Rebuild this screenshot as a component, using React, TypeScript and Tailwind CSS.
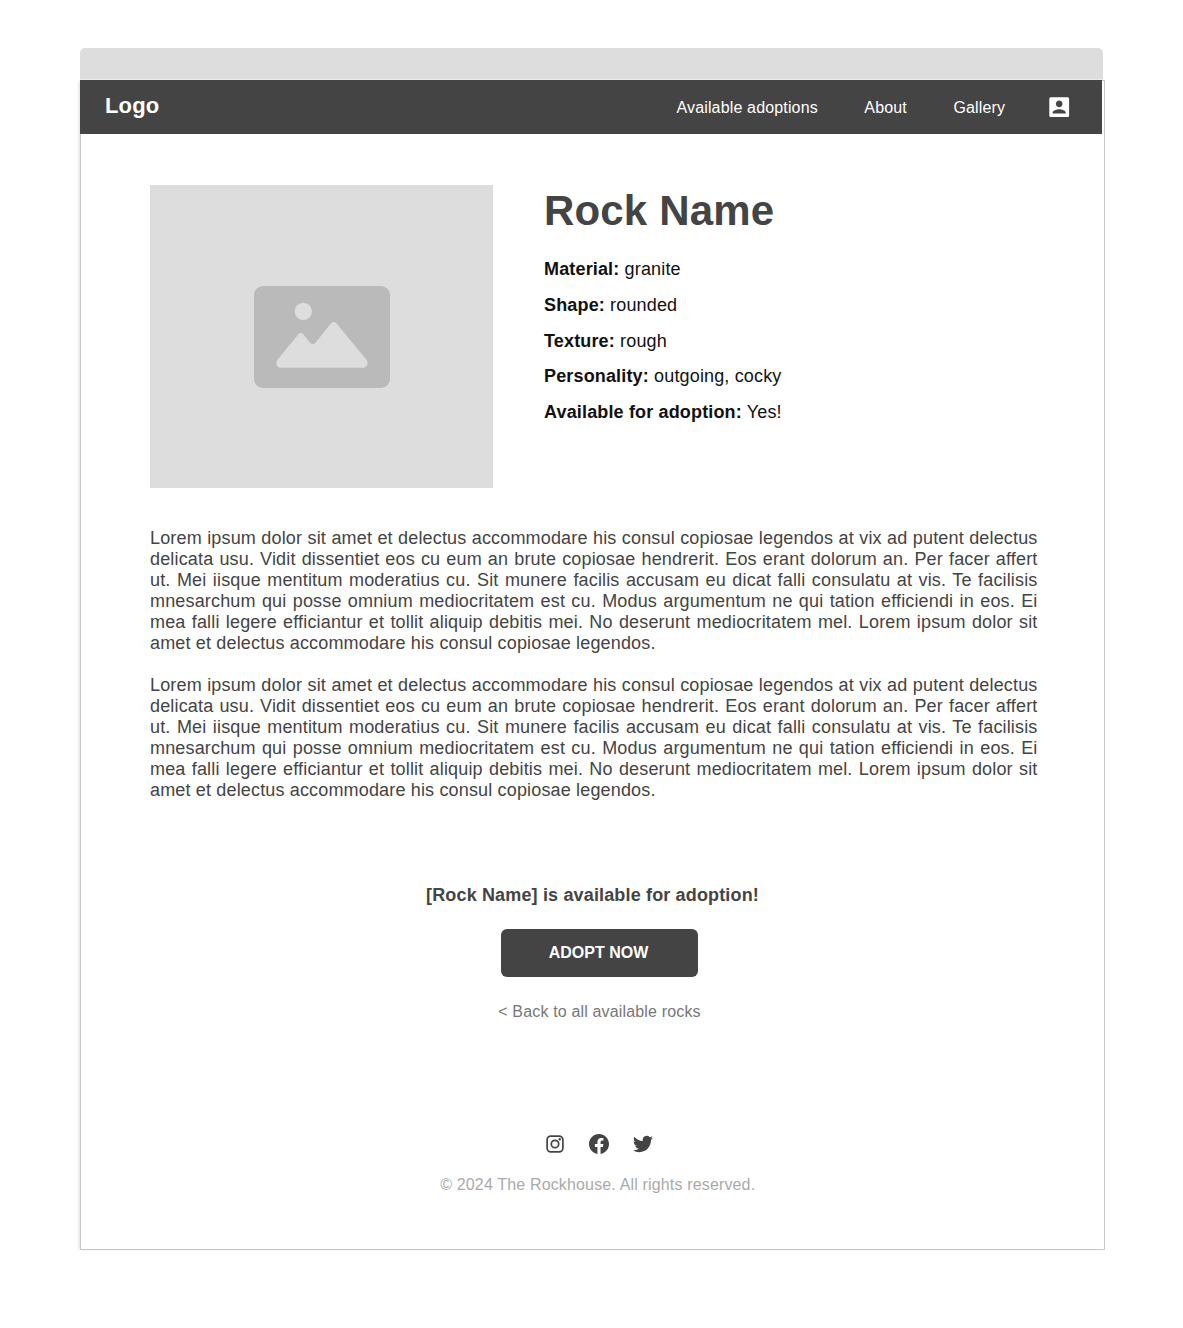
import React from "react";

const LOREM =
  "Lorem ipsum dolor sit amet et delectus accommodare his consul copiosae legendos at vix ad putent delectus delicata usu. Vidit dissentiet eos cu eum an brute copiosae hendrerit. Eos erant dolorum an. Per facer affert ut. Mei iisque mentitum moderatius cu. Sit munere facilis accusam eu dicat falli consulatu at vis. Te facilisis mnesarchum qui posse omnium mediocritatem est cu. Modus argumentum ne qui tation efficiendi in eos. Ei mea falli legere efficiantur et tollit aliquip debitis mei. No deserunt mediocritatem mel. Lorem ipsum dolor sit amet et delectus accommodare his consul copiosae legendos.";

const FACTS = [
  ["Material:", "granite"],
  ["Shape:", "rounded"],
  ["Texture:", "rough"],
  ["Personality:", "outgoing, cocky"],
  ["Available for adoption:", "Yes!"],
];

function ImagePlaceholder() {
  return (
    <div className="flex h-[303px] w-[343px] shrink-0 items-center justify-center bg-[#ddd]">
      <svg width="136" height="102" viewBox="0 0 136 102" className="ml-px">
        <rect width="136" height="102" rx="9" fill="#bababa" />
        <circle cx="49.3" cy="25.4" r="8.6" fill="#ddd" />
        <path
          d="M23.8 73.2 L43.8 49 Q46.8 45.2 49.8 48.8 L56 56.4 Q58.8 59.4 61.6 56.4 L76.5 37.9 Q79.8 34 83 37.9 L112.1 73.2 C115.6 77.8 112.4 81.8 108.8 81.8 H27 C23 81.8 20.6 77 23.8 73.2 Z"
          fill="#ddd"
        />
      </svg>
    </div>
  );
}

function AccountIcon() {
  return (
    <svg viewBox="0 0 24 24" fill="currentColor" className="ml-[40.4px] size-[26.4px] shrink-0">
      <path d="M3 4.5v15c0 .9.6 1.5 1.5 1.5h15c.9 0 1.5-.6 1.5-1.5v-15c0-.9-.6-1.5-1.5-1.5h-15C3.6 3 3 3.6 3 4.5zM15 9c0 1.66-1.34 3-3 3s-3-1.34-3-3 1.34-3 3-3 3 1.34 3 3zm-9 8c0-2 4-3.1 6-3.1s6 1.1 6 3.1v.8H6V17z" />
    </svg>
  );
}

function InstagramIcon() {
  return (
    <svg width="20" height="20" viewBox="0 0 20 20" fill="none" stroke="#444">
      <rect x="2.1" y="2.1" width="15.8" height="15.8" rx="3.8" strokeWidth="1.7" />
      <circle cx="10" cy="10" r="3.7" strokeWidth="1.7" />
      <circle cx="14.7" cy="5.2" r="1.2" fill="#444" stroke="none" />
    </svg>
  );
}

function FacebookIcon() {
  return (
    <svg width="20" height="20" viewBox="0 0 24 24" fill="#444">
      <path d="M24 12.07C24 5.4 18.63 0 12 0S0 5.4 0 12.07c0 6.03 4.39 11.02 10.13 11.93v-8.44H7.08v-3.49h3.05V9.41c0-3.02 1.79-4.69 4.53-4.69 1.31 0 2.68.24 2.68.24v2.97h-1.51c-1.49 0-1.96.93-1.96 1.89v2.25h3.33l-.53 3.49h-2.8V24C19.61 23.09 24 18.1 24 12.07z" />
    </svg>
  );
}

function TwitterIcon() {
  return (
    <svg width="20" height="20" viewBox="0 0 24 24" fill="#444">
      <path d="M23.95 4.57a10 10 0 0 1-2.82.77 4.96 4.96 0 0 0 2.16-2.72c-.95.55-2 .95-3.13 1.18a4.92 4.92 0 0 0-8.38 4.48C7.69 8.1 4.07 6.13 1.64 3.16a4.82 4.82 0 0 0-.67 2.48c0 1.71.87 3.21 2.19 4.1a4.9 4.9 0 0 1-2.23-.62v.06a4.92 4.92 0 0 0 3.95 4.83 5 5 0 0 1-2.21.08 4.94 4.94 0 0 0 4.6 3.42A9.87 9.87 0 0 1 0 19.54a13.99 13.99 0 0 0 7.56 2.21c9.05 0 14-7.5 14-13.98 0-.21 0-.42-.02-.63a9.94 9.94 0 0 0 2.46-2.55l-.05-.02z" />
    </svg>
  );
}

export default function App() {
  return (
    <div className="min-h-[1328px] bg-white pt-12 pl-20 font-['Liberation_Sans',Arial,sans-serif]">
      <div className="h-8 w-[1023px] rounded-t-[5px] border-b border-[#f3f3f3] bg-[#ddd]" />
      <div className="flex h-[1170px] w-[1025px] flex-col border border-[#c8c8c8] bg-white tracking-[0.155px] shadow-[-2px_0_3px_-1px_rgba(0,0,0,0.14)]">
        <header className="-mt-px -ml-px flex h-[54px] w-[1022px] shrink-0 items-center bg-[#444] pr-[30px] pl-[25px] text-white">
          <div className="-mt-0.5 text-[22px] leading-7 font-bold">Logo</div>
          <nav className="mt-0.5 ml-auto flex items-center gap-[46.5px] text-base">
            <a>Available adoptions</a>
            <a>About</a>
            <a>Gallery</a>
          </nav>
          <AccountIcon />
        </header>

        <main className="flex flex-col px-[69px] pt-[51px]">
          <section className="flex gap-[51px]">
            <ImagePlaceholder />
            <div>
              <h1 className="text-[42px] leading-[52px] font-bold text-[#444]">Rock Name</h1>
              <ul className="mt-[15px] text-lg leading-[35.8px] text-[#111]">
                {FACTS.map(([label, value]) => (
                  <li key={label}>
                    <b>{label}</b> {value}
                  </li>
                ))}
              </ul>
            </div>
          </section>

          <section className="mt-10 flex w-[887.5px] flex-col gap-[21px] text-justify text-lg leading-[21px] tracking-[0.16px] text-[#444]">
            <p>{LOREM}</p>
            <p>{LOREM}</p>
          </section>
        </main>

        <section className="mt-[84px] ml-[14px] flex flex-col items-center">
          <p className="mr-[14px] text-lg leading-[21px] font-bold text-[#444]">
            [Rock Name] is available for adoption!
          </p>
          <button className="mt-[23px] h-12 w-[197px] rounded-md bg-[#444] pr-0.5 text-base font-bold tracking-normal text-white">
            ADOPT NOW
          </button>
          <a className="mt-[23px] text-base tracking-[0.16px] text-[#777]">&lt; Back to all available rocks</a>
        </section>

        <footer className="mt-[110px] ml-[12px] flex flex-col items-center">
          <div className="flex gap-6">
            <InstagramIcon />
            <FacebookIcon />
            <TwitterIcon />
          </div>
          <p className="mt-[19px] mr-[1.5px] text-base text-[#aaa]">© 2024 The Rockhouse. All rights reserved.</p>
        </footer>
      </div>
    </div>
  );
}
